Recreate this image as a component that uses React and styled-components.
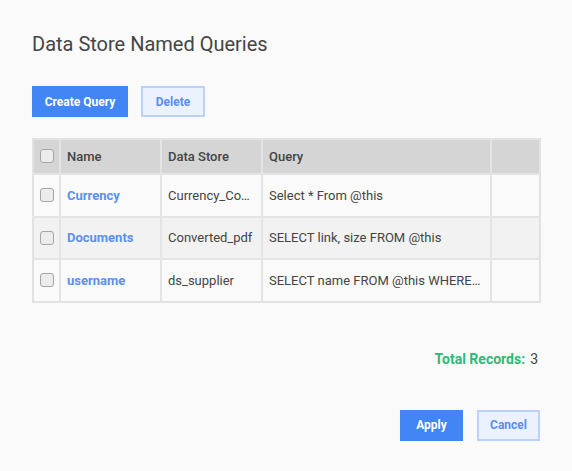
import React from 'react'
import styled, { createGlobalStyle } from 'styled-components'

const Global = createGlobalStyle`
    body {
        margin: 0;
        background: #fafafa;
        font-family: Roboto, "Liberation Sans", sans-serif;
        color: #444;
    }
`

const Page = styled.div`
    width: 572px;
    height: 471px;
    padding: 30px 32px 0 32px;
    box-sizing: border-box;
    display: flex;
    flex-direction: column;
`

const Title = styled.h1`
    margin: 0;
    font-size: 20px;
    font-weight: 400;
    line-height: 28px;
    color: #454545;
`

const Toolbar = styled.div`
    display: flex;
    gap: 13px;
    margin-top: 28px;
`

const Button = styled.button`
    height: 31px;
    padding: 0;
    font-family: Roboto, "Liberation Sans", sans-serif;
    font-size: 12px;
    font-weight: 700;
    white-space: nowrap;
    border-radius: 0;
    cursor: pointer;
    box-sizing: border-box;
    background: ${p => (p.$primary ? '#4285f4' : '#ebf2fe')};
    color: ${p => (p.$primary ? '#fff' : '#5c8df5')};
    border: ${p => (p.$primary ? 'none' : '2px solid #b9d1fb')};
    width: ${p => p.$w}px;
`

const Table = styled.table`
    margin-top: 21px;
    width: 509px;
    border-collapse: collapse;
    border: 2px solid #e2e2e2;
    table-layout: fixed;
    font-size: 13px;
`

const Th = styled.th`
    height: 32px;
    background: #d5d5d5;
    border-left: 2px solid #e4e4e4;
    text-align: left;
    font-weight: 500;
    color: #444;
    padding: 0 6px 1px;
    &:first-child { border-left: none; }
`

const Tr = styled.tr`
    background: ${p => (p.$alt ? '#f2f2f2' : '#fafafa')};
`

const Td = styled.td`
    height: 40.5px;
    border-left: 2px solid #e4e4e4;
    border-top: 2px solid #e4e4e4;
    padding: 0 6px;
    white-space: nowrap;
    color: #444;
    &:first-child { border-left: none; }
`

const NameLink = styled.span`
    color: #5b8ff0;
    font-weight: 700;
`

const Check = styled.span`
    display: block;
    width: 12px;
    height: 12px;
    margin: 0 auto;
    border: 1px solid #a5a5a5;
    border-radius: 3px;
    background: #ececec;
`

const Total = styled.div`
    margin-top: 48px;
    align-self: flex-end;
    font-size: 14px;
    margin-right: 2px;
`

const TotalLabel = styled.span`
    color: #2dbb74;
    font-weight: 700;
    margin-right: 5px;
`

const Footer = styled.div`
    margin-top: 43px;
    align-self: flex-end;
    display: flex;
    gap: 14px;
`

const rows = [
    { name: 'Currency', store: 'Currency_Co…', query: 'Select * From @this' },
    { name: 'Documents', store: 'Converted_pdf', query: 'SELECT link, size FROM @this' },
    { name: 'username', store: 'ds_supplier', query: 'SELECT name FROM @this WHERE…' },
]

export default function App() {
    return (
        <>
            <Global />
            <Page>
                <Title>Data Store Named Queries</Title>
                <Toolbar>
                    <Button $primary $w={96}>Create Query</Button>
                    <Button $w={64}>Delete</Button>
                </Toolbar>
                <Table>
                    <colgroup>
                        <col style={{ width: 27 }} />
                        <col style={{ width: 101 }} />
                        <col style={{ width: 101 }} />
                        <col style={{ width: 229 }} />
                        <col />
                    </colgroup>
                    <thead>
                        <tr>
                            <Th><Check /></Th>
                            <Th>Name</Th>
                            <Th>Data Store</Th>
                            <Th>Query</Th>
                            <Th />
                        </tr>
                    </thead>
                    <tbody>
                        {rows.map((r, i) => (
                            <Tr key={r.name} $alt={i === 1}>
                                <Td><Check /></Td>
                                <Td><NameLink>{r.name}</NameLink></Td>
                                <Td>{r.store}</Td>
                                <Td>{r.query}</Td>
                                <Td />
                            </Tr>
                        ))}
                    </tbody>
                </Table>
                <Total>
                    <TotalLabel>Total Records:</TotalLabel>3
                </Total>
                <Footer>
                    <Button $primary $w={63}>Apply</Button>
                    <Button $w={63}>Cancel</Button>
                </Footer>
            </Page>
        </>
    )
}
